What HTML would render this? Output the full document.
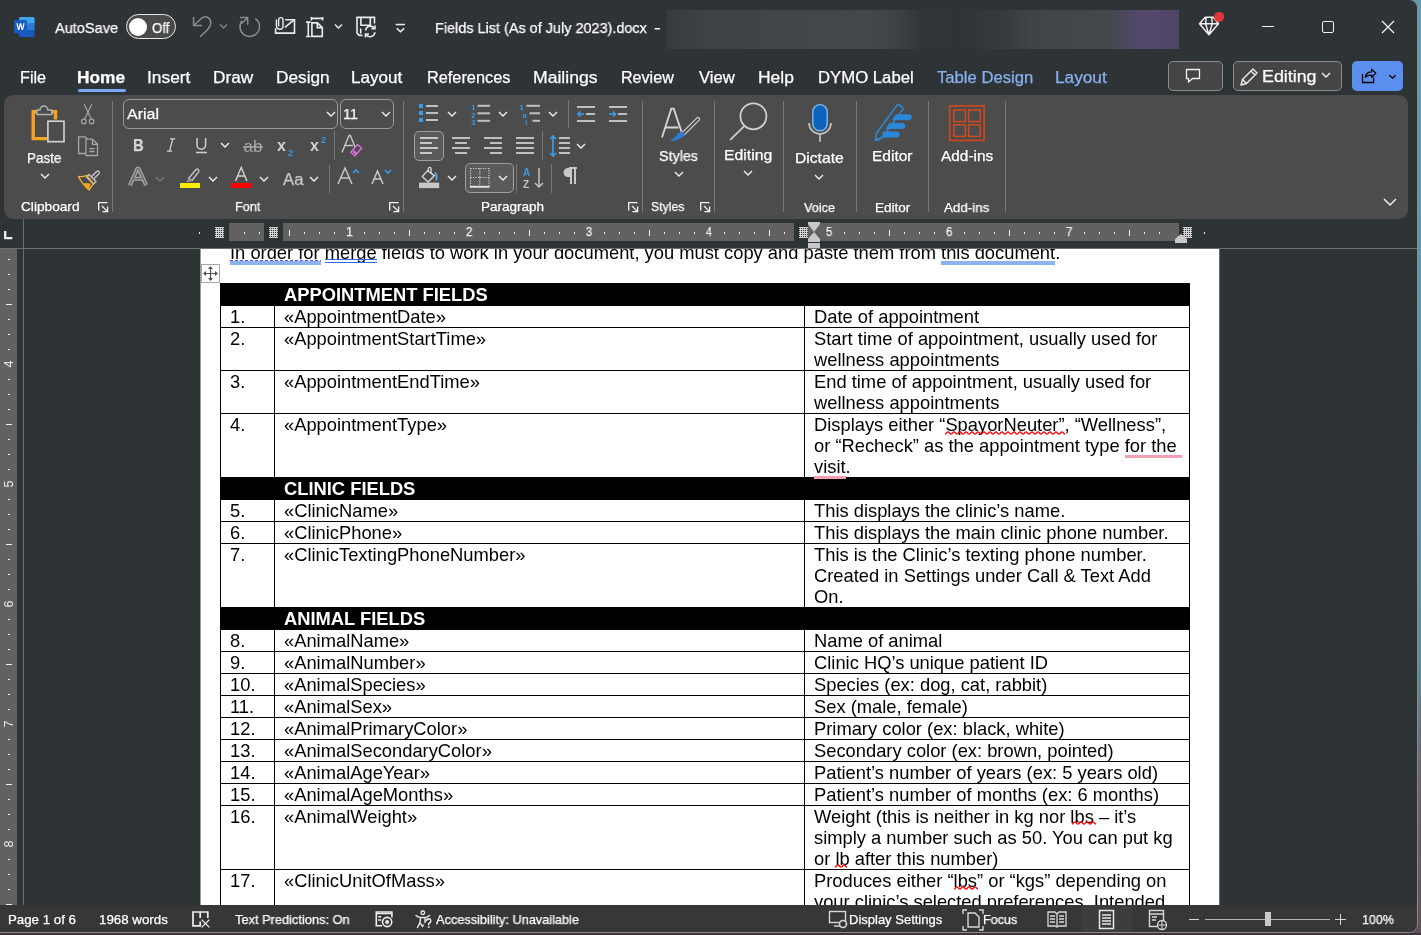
<!DOCTYPE html>
<html><head><meta charset="utf-8"><style>
html,body{margin:0;padding:0;width:1421px;height:935px;overflow:hidden;background:#3a3438;}
body{position:relative;font-family:"Liberation Sans",sans-serif;}
.t{position:absolute;white-space:pre;transform-origin:0 0;will-change:transform;}
.r{position:absolute;}
.s{position:absolute;overflow:visible;will-change:transform;}
</style></head><body>
<div class="r" style="left:0px;top:0px;width:1421px;height:935px;background:linear-gradient(180deg,#609db4 0%,#5a93a8 55%,#5d8a99 72%,#6e6670 82%,#5e5059 100%);"></div>
<div class="r" style="left:0px;top:933px;width:1421px;height:2px;background:#3e3439;"></div>
<div class="r" style="left:-10px;top:-1px;width:1428px;height:934px;background:#2e3336;border:1px solid #8a8a8a;border-radius:9px;box-sizing:border-box;"></div>
<svg class="s" style="left:13px;top:16px;" width="23" height="23" viewBox="0 0 23 23"><rect x="6" y="1" width="15.5" height="20" rx="1.6" fill="#185abd"/><rect x="6" y="1" width="15.5" height="7.5" rx="1.6" fill="#41a5ee"/><rect x="6" y="7" width="15.5" height="7" fill="#2b7cd3"/><rect x="1" y="4" width="13" height="13.5" rx="1.5" fill="#1a5bc0"/><path d="M3.3 7.3 5 14h1.3l1.2-4.6 1.2 4.6h1.3l1.7-6.7h-1.3l-1 4.7L8.2 7.3H6.8L5.6 12 4.6 7.3z" fill="#fff"/></svg>
<div class="t" style="left:55.00px;top:20.30px;font-size:15px;line-height:15px;color:#fff;-webkit-text-stroke:0.25px #fff;transform:scaleX(0.9701);">AutoSave</div>
<div class="r" style="left:126px;top:14px;width:50px;height:25px;background:#4a4a4a;border:1.5px solid #e8e8e8;border-radius:13px;box-sizing:border-box;"></div>
<div class="r" style="left:129px;top:18px;width:18px;height:18px;background:#fff;border-radius:50%;"></div>
<div class="t" style="left:152.10px;top:20.65px;font-size:14px;line-height:14px;color:#fff;-webkit-text-stroke:0.25px #fff;transform:scaleX(0.9468);">Off</div>
<svg class="s" style="left:186px;top:12px;" width="80" height="30" viewBox="0 0 80 30"><path d="M7.6 5v8.5H16" stroke="#8c8c8c" stroke-width="1.5" fill="none"/><path d="M8 13.2 15.5 6.3Q18.5 4 21.5 5.2Q25.5 7.5 24.5 12.5Q23.8 15.5 20.5 18.8L14 24.8" stroke="#8c8c8c" stroke-width="1.5" fill="none"/><path d="M34 12.5l3.5 3.5 3.5-3.5" stroke="#8c8c8c" stroke-width="1.2" fill="none"/><path d="M69.3 6.6A9.8 9.8 0 1 1 56 8.7" stroke="#8c8c8c" stroke-width="1.5" fill="none"/><path d="M54 5.5h7.7v7.2M61.5 5.7 55.5 11.5" stroke="#8c8c8c" stroke-width="1.5" fill="none"/></svg>
<svg class="s" style="left:270px;top:10px;" width="80" height="32" viewBox="0 0 80 32"><path d="M15.2 9.7H24.5V23.1H5.6V18.2" stroke="#ececec" stroke-width="1.6" fill="none"/><path d="M14.9 17.4 24 9.9" stroke="#ececec" stroke-width="1.6"/><path d="M8.6 16.5V9.8a2.2 2.2 0 0 1 4.4 0v6.2a3.3 3.3 0 0 1-6.6 0V9.5" stroke="#ececec" stroke-width="1.4" fill="none"/><path d="M38.3 12.1V26.5M36 12.1h4.6M36 26.5h4.6" stroke="#ececec" stroke-width="1.6" fill="none"/><path d="M41.4 8.4h11.2M41.4 7v3.5M52.6 7v3.5" stroke="#ececec" stroke-width="1.6" fill="none"/><path d="M41.9 12.9H47.5L52.3 17.6V26.4H41.9z M47.3 12.9v4.7h5" stroke="#ececec" stroke-width="1.6" fill="none" stroke-linejoin="miter"/><path d="M65 14.6l3.5 3.5 3.5-3.5" stroke="#ececec" stroke-width="1.4" fill="none"/></svg>
<svg class="s" style="left:350px;top:10px;" width="70" height="32" viewBox="0 0 70 32"><path d="M12.5 25.4H9.3L7 23.1V7.4H24.5V13.5" stroke="#ececec" stroke-width="1.6" fill="none"/><path d="M10.7 18.5V23.5M10.9 8v7.2h9.4V8" stroke="#ececec" stroke-width="1.6" fill="none"/><path d="M15.6 20.5a4.8 4.8 0 0 1 8.8-2.2M24.9 22.3a4.8 4.8 0 0 1-8.8 2.2" stroke="#ececec" stroke-width="1.6" fill="none"/><path d="M25 15.2v3.6h-3.6M15.4 27.5v-3.6H19" stroke="#ececec" stroke-width="1.5" fill="none"/><path d="M45.8 14.5h9.1M46.8 18.4l3.7 3.4 3.7-3.4" stroke="#ececec" stroke-width="1.5" fill="none"/></svg>
<div class="t" style="left:435.04px;top:19.70px;font-size:15px;line-height:15px;color:#fff;-webkit-text-stroke:0.25px #fff;transform:scaleX(0.9626);">Fields List (As of July 2023).docx</div>
<div class="t" style="left:654.20px;top:20.30px;font-size:15px;line-height:15px;color:#fff;-webkit-text-stroke:0.25px #fff;transform:scaleX(1.3333);">-</div>
<div class="r" style="left:667px;top:10px;width:512px;height:39px;background:linear-gradient(90deg,#363b3e 0%,#3e4346 8%,#43484b 40%,#3c4144 45%,#313538 50%,#2f3336 57%,#363b3e 66%,#3f4447 71%,#43484b 86%,#55496e 93%,#4e4567 100%);"></div>
<svg class="s" style="left:1190px;top:8px;" width="36" height="32" viewBox="0 0 36 32"><path d="M9.5 15.8 15.3 9.3H23.3L28.5 15.8 18.9 26.7Z M9.5 15.8H28.5 M16.2 9.5 15.6 15.8 18.9 26.7 M21.8 9.5 22.2 15.8 18.9 26.7" stroke="#f4f4f4" stroke-width="1.4" fill="none" stroke-linejoin="round"/><circle cx="29.1" cy="8.9" r="5" fill="#e2353b"/></svg>
<div class="r" style="left:1262px;top:26px;width:12px;height:1px;background:#f0f0f0;"></div>
<div class="r" style="left:1322px;top:21px;width:12px;height:12px;background:transparent;border:1.3px solid #f0f0f0;border-radius:2px;box-sizing:border-box;"></div>
<svg class="s" style="left:1381px;top:20px;" width="14" height="14" viewBox="0 0 14 14"><path d="M1 1l12 12M13 1L1 13" stroke="#f0f0f0" stroke-width="1.3"/></svg>
<div class="t" style="left:20.11px;top:70.06px;font-size:16px;line-height:16px;color:#ffffff;-webkit-text-stroke:0.25px #ffffff;transform:scaleX(1.0109);">File</div>
<div class="t" style="left:77.27px;top:70.06px;font-size:16px;line-height:16px;color:#ffffff;-webkit-text-stroke:0.25px #ffffff;font-weight:bold;transform:scaleX(1.0821);">Home</div>
<div class="t" style="left:146.64px;top:70.06px;font-size:16px;line-height:16px;color:#ffffff;-webkit-text-stroke:0.25px #ffffff;transform:scaleX(1.0840);">Insert</div>
<div class="t" style="left:212.62px;top:70.06px;font-size:16px;line-height:16px;color:#ffffff;-webkit-text-stroke:0.25px #ffffff;transform:scaleX(1.0754);">Draw</div>
<div class="t" style="left:276.02px;top:70.06px;font-size:16px;line-height:16px;color:#ffffff;-webkit-text-stroke:0.25px #ffffff;transform:scaleX(1.0774);">Design</div>
<div class="t" style="left:350.84px;top:70.06px;font-size:16px;line-height:16px;color:#ffffff;-webkit-text-stroke:0.25px #ffffff;transform:scaleX(1.0659);">Layout</div>
<div class="t" style="left:426.90px;top:70.06px;font-size:16px;line-height:16px;color:#ffffff;-webkit-text-stroke:0.25px #ffffff;transform:scaleX(1.0188);">References</div>
<div class="t" style="left:533.19px;top:70.06px;font-size:16px;line-height:16px;color:#ffffff;-webkit-text-stroke:0.25px #ffffff;transform:scaleX(1.1006);">Mailings</div>
<div class="t" style="left:621.21px;top:70.06px;font-size:16px;line-height:16px;color:#ffffff;-webkit-text-stroke:0.25px #ffffff;transform:scaleX(1.0059);">Review</div>
<div class="t" style="left:699.00px;top:70.06px;font-size:16px;line-height:16px;color:#ffffff;-webkit-text-stroke:0.25px #ffffff;transform:scaleX(1.0407);">View</div>
<div class="t" style="left:757.80px;top:70.06px;font-size:16px;line-height:16px;color:#ffffff;-webkit-text-stroke:0.25px #ffffff;transform:scaleX(1.0917);">Help</div>
<div class="t" style="left:817.96px;top:70.06px;font-size:16px;line-height:16px;color:#ffffff;-webkit-text-stroke:0.25px #ffffff;transform:scaleX(1.0452);">DYMO Label</div>
<div class="t" style="left:936.77px;top:70.06px;font-size:16px;line-height:16px;color:#88b1f0;-webkit-text-stroke:0.25px #88b1f0;transform:scaleX(1.0406);">Table Design</div>
<div class="t" style="left:1054.82px;top:70.06px;font-size:16px;line-height:16px;color:#88b1f0;-webkit-text-stroke:0.25px #88b1f0;transform:scaleX(1.0766);">Layout</div>
<div class="r" style="left:78px;top:89px;width:48px;height:3px;background:#7ba7f7;border-radius:2px;"></div>
<div class="r" style="left:1168px;top:61px;width:55px;height:30px;background:#454545;border:1px solid #8c8c8c;border-radius:5px;box-sizing:border-box;"></div>
<svg class="s" style="left:1184px;top:66px;" width="18" height="18" viewBox="0 0 18 18"><path d="M2.5 3.5h13v9h-7l-4 3.5v-3.5h-2z" stroke="#f0f0f0" stroke-width="1.3" fill="none" stroke-linejoin="round"/></svg>
<div class="r" style="left:1233px;top:61px;width:109px;height:30px;background:#454545;border:1px solid #8c8c8c;border-radius:5px;box-sizing:border-box;"></div>
<svg class="s" style="left:1237px;top:65px;" width="24" height="24" viewBox="0 0 24 24"><path d="M4 20l1.5-5.5L16 4l4 4L9.5 18.5z M14 6l4 4 M5.5 14.5l4 4" stroke="#f0f0f0" stroke-width="1.4" fill="none" stroke-linejoin="round"/></svg>
<div class="t" style="left:1261.77px;top:67.63px;font-size:16.5px;line-height:16.5px;color:#fff;-webkit-text-stroke:0.25px #fff;transform:scaleX(1.0811);">Editing</div>
<svg class="s" style="left:1320px;top:70px;" width="12" height="10" viewBox="0 0 12 10"><path d="M2 3l4 4 4-4" stroke="#f0f0f0" stroke-width="1.4" fill="none"/></svg>
<div class="r" style="left:1352px;top:61px;width:51px;height:30px;background:#5b8fef;border-radius:5px;"></div>
<svg class="s" style="left:1350px;top:58px;" width="56" height="36" viewBox="0 0 56 36"><path d="M12.5 16V24.5H23.6V19.4" stroke="#000" stroke-width="1.3" fill="none"/><path d="M15.2 19.3Q16.3 13.8 21.6 13.8V11.2L25.8 15.3 21.6 19.3V17.2Q17.5 17 15.2 19.3Z" stroke="#000" stroke-width="1.2" fill="none" stroke-linejoin="round"/><path d="M39.4 17.2l3.1 3 3.1-3" stroke="#000" stroke-width="1.3" fill="none"/></svg>
<div class="r" style="left:4px;top:95px;width:1404px;height:124px;background:#4c4c4c;border-radius:9px;"></div>
<div class="r" style="left:112px;top:101px;width:1px;height:111px;background:#777777;"></div>
<div class="r" style="left:403px;top:101px;width:1px;height:111px;background:#777777;"></div>
<div class="r" style="left:642px;top:101px;width:1px;height:111px;background:#777777;"></div>
<div class="r" style="left:714px;top:101px;width:1px;height:111px;background:#777777;"></div>
<div class="r" style="left:783px;top:101px;width:1px;height:111px;background:#777777;"></div>
<div class="r" style="left:856px;top:101px;width:1px;height:111px;background:#777777;"></div>
<div class="r" style="left:928px;top:101px;width:1px;height:111px;background:#777777;"></div>
<div class="r" style="left:1005px;top:101px;width:1px;height:111px;background:#777777;"></div>
<svg class="s" style="left:25px;top:100px;" width="45" height="46" viewBox="0 0 45 46"><path d="M22 38.6H8.2V11.7H12M27 11.7h3.5v7.8" stroke="#f5a21e" stroke-width="3.4" fill="none"/><path d="M11.8 14.6V10H15A3.9 3.9 0 0 1 22.8 10H26.8V14.6Z" stroke="#b4b4b4" stroke-width="1.5" fill="#4c4c4c" stroke-linejoin="round"/><rect x="22.9" y="21.2" width="16.1" height="20.5" stroke="#d4d4d4" stroke-width="1.6" fill="#4c4c4c"/></svg>
<div class="t" style="left:27.43px;top:150.53px;font-size:14.5px;line-height:14.5px;color:#fff;-webkit-text-stroke:0.25px #fff;transform:scaleX(0.9261);">Paste</div>
<svg class="s" style="left:39px;top:172px;" width="12" height="8" viewBox="0 0 12 8"><path d="M2 2l4 4 4-4" stroke="#f0f0f0" stroke-width="1.4" fill="none"/></svg>
<svg class="s" style="left:74px;top:100px;" width="30" height="90" viewBox="0 0 30 90"><path d="M10.2 4.3 17.2 19M17.8 4.3 10.6 19" stroke="#a6a6a6" stroke-width="1.2" fill="none"/><circle cx="9.8" cy="21.4" r="2.3" stroke="#a6a6a6" stroke-width="1.2" fill="#4c4c4c"/><circle cx="17.6" cy="21.4" r="2.3" stroke="#a6a6a6" stroke-width="1.2" fill="#4c4c4c"/></svg>
<svg class="s" style="left:74px;top:130px;" width="30" height="30" viewBox="0 0 30 30"><path d="M11.3 23.5H4.6V6.8H11L13.5 9.3" stroke="#a6a6a6" stroke-width="1.3" fill="none"/><path d="M11.9 9.2H18.4L23.5 14.3V25.5H11.9z M18.4 9.2V14.3H23.5 M15.3 18.6h5.3 M15.3 21.5h5.3" stroke="#a6a6a6" stroke-width="1.3" fill="none" stroke-linejoin="round"/></svg>
<svg class="s" style="left:74px;top:160px;" width="30" height="30" viewBox="0 0 30 30"><path d="M17.6 16.5 22.6 11.5a1.6 1.6 0 0 1 2.3 2.3L19.9 18.8" stroke="#c8c8c8" stroke-width="1.3" fill="none"/><path d="M15 14.5 22 21.5 19.5 24 12.5 17z" stroke="#c8c8c8" stroke-width="1.3" fill="none" stroke-linejoin="round"/><path d="M4.5 16.5Q9 17 12.8 15.3L19.3 23.6Q16.8 27.5 15 30Q8 24 4.5 16.5z" stroke="#f5b43a" stroke-width="1.3" fill="none" stroke-linejoin="round"/><path d="M9 23.5Q12.5 22.5 16.5 23.8Q16 27 15 29Q11.5 26.5 9 23.5z" fill="#f5a21e"/></svg>
<div class="t" style="left:20.92px;top:200.27px;font-size:13.5px;line-height:13.5px;color:#fff;-webkit-text-stroke:0.25px #fff;transform:scaleX(1.0125);">Clipboard</div>
<svg class="s" style="left:98px;top:202px;" width="12" height="12" viewBox="0 0 12 12"><path d="M0.7 8.6V0.7H9.5M4 4l5.6 5.6M9.6 4.4V9.6H4.4" stroke="#f4f4f4" stroke-width="1.3" fill="none"/></svg>
<div class="r" style="left:123px;top:99px;width:215px;height:30px;background:transparent;border:1px solid #9a9a9a;border-radius:6px;box-sizing:border-box;"></div>
<div class="r" style="left:340px;top:99px;width:54px;height:30px;background:transparent;border:1px solid #9a9a9a;border-radius:6px;box-sizing:border-box;"></div>
<div class="t" style="left:126.50px;top:106.28px;font-size:15.5px;line-height:15.5px;color:#fff;-webkit-text-stroke:0.25px #fff;transform:scaleX(1.0309);">Arial</div>
<div class="t" style="left:342.83px;top:106.28px;font-size:15.5px;line-height:15.5px;color:#fff;-webkit-text-stroke:0.25px #fff;transform:scaleX(0.9237);">11</div>
<svg class="s" style="left:324.6px;top:109.5px;" width="12" height="8" viewBox="0 0 12 8"><path d="M2 2l4 4 4-4" stroke="#f0f0f0" stroke-width="1.4" fill="none"/></svg>
<svg class="s" style="left:380px;top:109.5px;" width="12" height="8" viewBox="0 0 12 8"><path d="M2 2l4 4 4-4" stroke="#f0f0f0" stroke-width="1.4" fill="none"/></svg>
<div class="t" style="left:133.05px;top:136.83px;font-size:16.5px;line-height:16.5px;color:#d8d8d8;-webkit-text-stroke:0.25px #d8d8d8;font-weight:bold;transform:scaleX(0.8869);">B</div>
<svg class="s" style="left:162px;top:136px;" width="16" height="17" viewBox="0 0 16 17"><path d="M8 2.8h5.2M5 15.2h5.2M10.8 2.8 7.5 15.2" stroke="#d0d0d0" stroke-width="1.3" fill="none"/></svg>
<svg class="s" style="left:192px;top:134px;" width="18" height="22" viewBox="0 0 18 22"><path d="M5 4v7a4.3 4.3 0 0 0 8.6 0V4" stroke="#d0d0d0" stroke-width="1.5" fill="none"/><path d="M4 18.5h11" stroke="#d0d0d0" stroke-width="1.6"/></svg>
<svg class="s" style="left:219px;top:141px;" width="12" height="8" viewBox="0 0 12 8"><path d="M2 2l4 4 4-4" stroke="#f0f0f0" stroke-width="1.4" fill="none"/></svg>
<svg class="s" style="left:241px;top:137px;" width="24" height="20" viewBox="0 0 24 20"><text x="12" y="15" font-family="Liberation Sans" font-size="17" fill="#a8a8a8" text-anchor="middle">ab</text><path d="M2 10h20" stroke="#a8a8a8" stroke-width="1.5"/></svg>
<svg class="s" style="left:276px;top:136px;" width="22" height="22" viewBox="0 0 22 22"><text x="1" y="15" font-family="Liberation Sans" font-weight="bold" font-size="16" fill="#d0d0d0">x</text><text x="12" y="20" font-family="Liberation Sans" font-weight="bold" font-size="9" fill="#3a9ae8">2</text></svg>
<svg class="s" style="left:309px;top:134px;" width="22" height="22" viewBox="0 0 22 22"><text x="1" y="17" font-family="Liberation Sans" font-weight="bold" font-size="16" fill="#d0d0d0">x</text><text x="12" y="9" font-family="Liberation Sans" font-weight="bold" font-size="9" fill="#3a9ae8">2</text></svg>
<div class="r" style="left:334px;top:131px;width:1px;height:29px;background:#777777;"></div>
<svg class="s" style="left:340px;top:134px;" width="26" height="24" viewBox="0 0 26 24"><path d="M2 18.5 9 1.5h1.3L15.5 14M5 11.5h8" stroke="#c8c8c8" stroke-width="1.4" fill="none"/><path d="M10.8 18.2 17.6 10.6 21.6 14.2 14.8 21.8z" stroke="#d86ce0" stroke-width="1.5" fill="#4c4c4c" stroke-linejoin="round"/><path d="M12.6 17.9 14.2 16.1 17.2 18.9 15.6 20.6z" fill="#d86ce0"/></svg>
<svg class="s" style="left:126px;top:165px;" width="24" height="24" viewBox="0 0 24 24"><path d="M3.8 20.3 11.3 3.8h1.4L20.2 20.3M7.5 13.8h9" stroke="#a4a4a4" stroke-width="4" fill="none" stroke-linejoin="round"/><path d="M3.8 20.3 11.3 3.8h1.4L20.2 20.3M7.5 13.8h9" stroke="#6e6e6e" stroke-width="1.5" fill="none" stroke-linejoin="round"/></svg>
<svg class="s" style="left:153.6px;top:175px;" width="12" height="8" viewBox="0 0 12 8"><path d="M2 2l4 4 4-4" stroke="#7a7a7a" stroke-width="1.4" fill="none"/></svg>
<svg class="s" style="left:179px;top:165px;" width="24" height="24" viewBox="0 0 24 24"><path d="M9.5 13.5 17 4.5a1.8 1.8 0 0 1 2.7 2.3L13 15.5z" stroke="#c8c8c8" stroke-width="1.3" fill="none" stroke-linejoin="round"/><path d="M9.5 13.5 7 17h5l1-1.5z" fill="#8e8e8e"/><rect x="1" y="18" width="20" height="5" fill="#ffee00"/></svg>
<svg class="s" style="left:207.4px;top:175px;" width="12" height="8" viewBox="0 0 12 8"><path d="M2 2l4 4 4-4" stroke="#f0f0f0" stroke-width="1.4" fill="none"/></svg>
<svg class="s" style="left:231px;top:163px;" width="22" height="26" viewBox="0 0 22 26"><path d="M4.5 18 10.2 4.5 16 18M6.7 13h7" stroke="#d4d4d4" stroke-width="1.4" fill="none"/><rect x="0" y="20" width="20.5" height="5" fill="#f00"/></svg>
<svg class="s" style="left:258.1px;top:175px;" width="12" height="8" viewBox="0 0 12 8"><path d="M2 2l4 4 4-4" stroke="#f0f0f0" stroke-width="1.4" fill="none"/></svg>
<div class="t" style="left:282.50px;top:172.46px;font-size:16px;line-height:16px;color:#c8c8c8;-webkit-text-stroke:0.25px #c8c8c8;transform:scaleX(1.0459);">Aa</div>
<svg class="s" style="left:307.7px;top:175px;" width="12" height="8" viewBox="0 0 12 8"><path d="M2 2l4 4 4-4" stroke="#f0f0f0" stroke-width="1.4" fill="none"/></svg>
<div class="r" style="left:329px;top:165px;width:1px;height:28px;background:#777777;"></div>
<svg class="s" style="left:336px;top:166px;" width="24" height="20" viewBox="0 0 24 20"><path d="M2 18 9 2l7 16M5 12h8" stroke="#c8c8c8" stroke-width="1.5" fill="none"/><path d="M17 7l3-3 3 3" stroke="#3a9ae8" stroke-width="1.6" fill="none"/></svg>
<svg class="s" style="left:370px;top:166px;" width="22" height="20" viewBox="0 0 22 20"><path d="M2 18 7.5 5 13 18M4 13h7" stroke="#c8c8c8" stroke-width="1.5" fill="none"/><path d="M15 4l3 3 3-3" stroke="#3a9ae8" stroke-width="1.6" fill="none"/></svg>
<div class="t" style="left:234.59px;top:200.27px;font-size:13.5px;line-height:13.5px;color:#fff;-webkit-text-stroke:0.25px #fff;transform:scaleX(0.9375);">Font</div>
<svg class="s" style="left:389px;top:202px;" width="12" height="12" viewBox="0 0 12 12"><path d="M0.7 8.6V0.7H9.5M4 4l5.6 5.6M9.6 4.4V9.6H4.4" stroke="#f4f4f4" stroke-width="1.3" fill="none"/></svg>
<svg class="s" style="left:418px;top:103px;" width="24" height="20" viewBox="0 0 24 20"><rect x="1" y="1" width="4" height="4" fill="#3a9ae8"/><rect x="1" y="8" width="4" height="4" fill="#3a9ae8"/><rect x="1" y="15" width="4" height="4" fill="#3a9ae8"/><rect x="8" y="2" width="12" height="2" fill="#c0c0c0"/><rect x="8" y="9" width="12" height="2" fill="#c0c0c0"/><rect x="8" y="16" width="12" height="2" fill="#c0c0c0"/></svg>
<svg class="s" style="left:446px;top:110px;" width="12" height="8" viewBox="0 0 12 8"><path d="M2 2l4 4 4-4" stroke="#f0f0f0" stroke-width="1.4" fill="none"/></svg>
<svg class="s" style="left:469px;top:102px;" width="24" height="22" viewBox="0 0 24 22"><text x="2.3" y="8.2" font-size="7.5" font-weight="bold" fill="#3a9ae8" font-family="Liberation Sans">1</text><text x="2.3" y="15.7" font-size="7.5" font-weight="bold" fill="#3a9ae8" font-family="Liberation Sans">2</text><text x="2.3" y="23.2" font-size="7.5" font-weight="bold" fill="#3a9ae8" font-family="Liberation Sans">3</text><rect x="8.5" y="2.8" width="12.5" height="2" fill="#c0c0c0"/><rect x="8.5" y="10.3" width="12.5" height="2" fill="#c0c0c0"/><rect x="8.5" y="17.8" width="12.5" height="2" fill="#c0c0c0"/></svg>
<svg class="s" style="left:497px;top:110px;" width="12" height="8" viewBox="0 0 12 8"><path d="M2 2l4 4 4-4" stroke="#f0f0f0" stroke-width="1.4" fill="none"/></svg>
<svg class="s" style="left:519px;top:102px;" width="24" height="22" viewBox="0 0 24 22"><text x="0.5" y="8.2" font-size="7.5" font-weight="bold" fill="#3a9ae8" font-family="Liberation Sans">1</text><text x="3.5" y="15.7" font-size="7.5" font-weight="bold" fill="#3a9ae8" font-family="Liberation Sans">a</text><text x="6.3" y="23.2" font-size="7.5" font-weight="bold" fill="#3a9ae8" font-family="Liberation Sans">i</text><rect x="7.5" y="2.8" width="13.5" height="2" fill="#c0c0c0"/><rect x="10.5" y="10.3" width="10.5" height="2" fill="#c0c0c0"/><rect x="13.5" y="17.8" width="7.5" height="2" fill="#c0c0c0"/></svg>
<svg class="s" style="left:546.5px;top:110px;" width="12" height="8" viewBox="0 0 12 8"><path d="M2 2l4 4 4-4" stroke="#f0f0f0" stroke-width="1.4" fill="none"/></svg>
<svg class="s" style="left:576px;top:104px;" width="20" height="20" viewBox="0 0 20 20"><rect x="1" y="2" width="18" height="2" fill="#c0c0c0"/><rect x="10" y="9" width="9" height="2" fill="#c0c0c0"/><rect x="1" y="16" width="18" height="2" fill="#c0c0c0"/><path d="M8 10H2M4.5 7.5 2 10l2.5 2.5" stroke="#3a9ae8" stroke-width="1.6" fill="none"/></svg>
<svg class="s" style="left:608px;top:104px;" width="20" height="20" viewBox="0 0 20 20"><rect x="1" y="2" width="18" height="2" fill="#c0c0c0"/><rect x="10" y="9" width="9" height="2" fill="#c0c0c0"/><rect x="1" y="16" width="18" height="2" fill="#c0c0c0"/><path d="M1 10h6.5M5 7.5 7.5 10 5 12.5" stroke="#3a9ae8" stroke-width="1.6" fill="none"/></svg>
<div class="r" style="left:568px;top:100px;width:1px;height:28px;background:#777777;"></div>
<div class="r" style="left:414px;top:131px;width:30px;height:30px;background:#5a5a5a;border:1px solid #a0a0a0;border-radius:5px;box-sizing:border-box;"></div>
<svg class="s" style="left:419px;top:135px;" width="20" height="20" viewBox="0 0 20 20"><rect x="1" y="2" width="18" height="2" fill="#c8c8c8"/><rect x="1" y="7" width="12" height="2" fill="#c8c8c8"/><rect x="1" y="12" width="18" height="2" fill="#c8c8c8"/><rect x="1" y="17" width="12" height="2" fill="#c8c8c8"/></svg>
<svg class="s" style="left:451px;top:135px;" width="20" height="20" viewBox="0 0 20 20"><rect x="1" y="2" width="18" height="2" fill="#c0c0c0"/><rect x="4" y="7" width="12" height="2" fill="#c0c0c0"/><rect x="1" y="12" width="18" height="2" fill="#c0c0c0"/><rect x="4" y="17" width="12" height="2" fill="#c0c0c0"/></svg>
<svg class="s" style="left:483px;top:135px;" width="20" height="20" viewBox="0 0 20 20"><rect x="1" y="2" width="18" height="2" fill="#c0c0c0"/><rect x="7" y="7" width="12" height="2" fill="#c0c0c0"/><rect x="1" y="12" width="18" height="2" fill="#c0c0c0"/><rect x="7" y="17" width="12" height="2" fill="#c0c0c0"/></svg>
<svg class="s" style="left:515px;top:135px;" width="20" height="20" viewBox="0 0 20 20"><rect x="1" y="2" width="18" height="2" fill="#c0c0c0"/><rect x="1" y="7" width="18" height="2" fill="#c0c0c0"/><rect x="1" y="12" width="18" height="2" fill="#c0c0c0"/><rect x="1" y="17" width="18" height="2" fill="#c0c0c0"/></svg>
<div class="r" style="left:542px;top:131px;width:1px;height:29px;background:#777777;"></div>
<svg class="s" style="left:549px;top:134px;" width="24" height="24" viewBox="0 0 24 24"><path d="M4 2v20M1 5l3-3 3 3M1 19l3 3 3-3" stroke="#3a9ae8" stroke-width="1.7" fill="none"/><rect x="10" y="3" width="11" height="2" fill="#c0c0c0"/><rect x="10" y="8" width="11" height="2" fill="#c0c0c0"/><rect x="10" y="13" width="11" height="2" fill="#c0c0c0"/><rect x="10" y="18" width="11" height="2" fill="#c0c0c0"/></svg>
<svg class="s" style="left:575.3px;top:142px;" width="12" height="8" viewBox="0 0 12 8"><path d="M2 2l4 4 4-4" stroke="#f0f0f0" stroke-width="1.4" fill="none"/></svg>
<svg class="s" style="left:412px;top:160px;" width="30" height="30" viewBox="0 0 30 30"><path d="M10.2 16.6 15.6 10.6 22.4 15.6 16.2 22z" stroke="#d8d8d8" stroke-width="1.4" fill="none" stroke-linejoin="round"/><path d="M16.3 11.2V8.8a1.4 1.4 0 0 1 2.8 0V14" stroke="#d8d8d8" stroke-width="1.3" fill="none"/><path d="M23 12.5Q25.3 15 24.2 20.5" stroke="#5aaaf0" stroke-width="1.8" fill="none"/><rect x="7.3" y="23" width="19.6" height="4.8" fill="#c8c8c8" stroke="#dadada" stroke-width="0.6"/></svg>
<svg class="s" style="left:446px;top:174px;" width="12" height="8" viewBox="0 0 12 8"><path d="M2 2l4 4 4-4" stroke="#f0f0f0" stroke-width="1.4" fill="none"/></svg>
<div class="r" style="left:465px;top:163px;width:49px;height:30px;background:#5a5a5a;border:1px solid #a0a0a0;border-radius:5px;box-sizing:border-box;"></div>
<svg class="s" style="left:465px;top:163px;" width="30" height="30" viewBox="0 0 30 30"><rect x="5.5" y="5.5" width="18.5" height="18" stroke="#d4d4d4" stroke-width="1.1" stroke-dasharray="1.2 1.3" fill="none"/><path d="M14.8 5.5V23.5M5.5 14.5H24" stroke="#d4d4d4" stroke-width="1.1" stroke-dasharray="1.2 1.3"/><rect x="5" y="22.8" width="19.5" height="2" fill="#e0e0e0"/></svg>
<svg class="s" style="left:497px;top:174px;" width="12" height="8" viewBox="0 0 12 8"><path d="M2 2l4 4 4-4" stroke="#f0f0f0" stroke-width="1.4" fill="none"/></svg>
<div class="r" style="left:516px;top:164px;width:1px;height:29px;background:#777777;"></div>
<svg class="s" style="left:522px;top:165px;" width="24" height="26" viewBox="0 0 24 26"><text x="1" y="11" font-size="10" font-weight="bold" fill="#3a9ae8" font-family="Liberation Sans">A</text><text x="1" y="23" font-size="10" font-weight="bold" fill="#c0c0c0" font-family="Liberation Sans">Z</text><path d="M17 3v19M13 18l4 4 4-4" stroke="#c0c0c0" stroke-width="1.5" fill="none"/></svg>
<div class="r" style="left:551px;top:164px;width:1px;height:29px;background:#777777;"></div>
<svg class="s" style="left:560px;top:166px;" width="18" height="20" viewBox="0 0 18 20"><path d="M9 2h8M11 2v16M15 2v16" stroke="#c8c8c8" stroke-width="2" fill="none"/><path d="M11 2H8a4.5 4.5 0 0 0 0 9h3z" fill="#c8c8c8"/></svg>
<div class="t" style="left:481.13px;top:200.27px;font-size:13.5px;line-height:13.5px;color:#fff;-webkit-text-stroke:0.25px #fff;transform:scaleX(0.9942);">Paragraph</div>
<svg class="s" style="left:628px;top:202px;" width="12" height="12" viewBox="0 0 12 12"><path d="M0.7 8.6V0.7H9.5M4 4l5.6 5.6M9.6 4.4V9.6H4.4" stroke="#f4f4f4" stroke-width="1.3" fill="none"/></svg>
<svg class="s" style="left:658px;top:105px;" width="44" height="40" viewBox="0 0 44 40"><path d="M4 32.5 13.3 3.6h2.4L25 31M8 22.5h12.5" stroke="#d8d8d8" stroke-width="1.8" fill="none"/><path d="M25.5 28.5 40 14" stroke="#d0d0d0" stroke-width="4.2" stroke-linecap="round"/><path d="M25.5 28.5 40 14" stroke="#4c4c4c" stroke-width="1.8" stroke-linecap="round"/><path d="M11.5 35.5C16 36.5 23 35 27 29.5L23.8 26.5C19 27.5 18 33.5 11.5 35.5z" fill="#2a7fd4"/></svg>
<div class="t" style="left:659.36px;top:148.53px;font-size:14.5px;line-height:14.5px;color:#fff;-webkit-text-stroke:0.25px #fff;transform:scaleX(0.9830);">Styles</div>
<svg class="s" style="left:672.6px;top:170px;" width="12" height="8" viewBox="0 0 12 8"><path d="M2 2l4 4 4-4" stroke="#f0f0f0" stroke-width="1.4" fill="none"/></svg>
<div class="t" style="left:651.25px;top:200.27px;font-size:13.5px;line-height:13.5px;color:#fff;-webkit-text-stroke:0.25px #fff;transform:scaleX(0.9074);">Styles</div>
<svg class="s" style="left:700px;top:202px;" width="12" height="12" viewBox="0 0 12 12"><path d="M0.7 8.6V0.7H9.5M4 4l5.6 5.6M9.6 4.4V9.6H4.4" stroke="#f4f4f4" stroke-width="1.3" fill="none"/></svg>
<svg class="s" style="left:728px;top:102px;" width="42" height="42" viewBox="0 0 42 42"><circle cx="25.4" cy="14.3" r="13" stroke="#cfcfcf" stroke-width="1.8" fill="none"/><path d="M16 24.3 2.2 37.8" stroke="#cfcfcf" stroke-width="1.8"/></svg>
<div class="t" style="left:723.94px;top:147.53px;font-size:14.5px;line-height:14.5px;color:#fff;-webkit-text-stroke:0.25px #fff;transform:scaleX(1.0883);">Editing</div>
<svg class="s" style="left:742.4px;top:168.6px;" width="12" height="8" viewBox="0 0 12 8"><path d="M2 2l4 4 4-4" stroke="#f0f0f0" stroke-width="1.4" fill="none"/></svg>
<svg class="s" style="left:806px;top:103px;" width="28" height="42" viewBox="0 0 28 42"><rect x="6.8" y="1.6" width="14.4" height="26.2" rx="7.2" fill="#0e63ba" stroke="#7db7f2" stroke-width="1.4"/><path d="M3 20a11 11 0 0 0 22 0" stroke="#c8c8c8" stroke-width="1.6" fill="none"/><path d="M14 31v8" stroke="#c8c8c8" stroke-width="1.6"/></svg>
<div class="t" style="left:795.35px;top:151.03px;font-size:14.5px;line-height:14.5px;color:#fff;-webkit-text-stroke:0.25px #fff;transform:scaleX(1.0795);">Dictate</div>
<svg class="s" style="left:813.4px;top:172.9px;" width="12" height="8" viewBox="0 0 12 8"><path d="M2 2l4 4 4-4" stroke="#f0f0f0" stroke-width="1.4" fill="none"/></svg>
<div class="t" style="left:804.00px;top:201.07px;font-size:13.5px;line-height:13.5px;color:#fff;-webkit-text-stroke:0.25px #fff;transform:scaleX(0.9394);">Voice</div>
<svg class="s" style="left:860px;top:98px;" width="56" height="48" viewBox="0 0 56 48"><path d="M15.2 42.3 16.3 35.5 37 7.2a1.5 1.5 0 0 1 2.1-.4L42.5 9.3a1.5 1.5 0 0 1 .3 2.1L22 39.8z" stroke="#2b88d8" stroke-width="1.5" fill="none" stroke-linejoin="round"/><path d="M36 16.3H48.8a2.95 2.95 0 0 1 0 5.9H31.8zM29.6 25.1H42.3a2.95 2.95 0 0 1 0 5.9H25.3zM23.2 33.6H36.6a3 3 0 0 1 0 6H20.9z" fill="#2b88d8"/><path d="M15.2 42.3 20 41" stroke="#2b88d8" stroke-width="2"/></svg>
<div class="t" style="left:872.36px;top:149.03px;font-size:14.5px;line-height:14.5px;color:#fff;-webkit-text-stroke:0.25px #fff;transform:scaleX(1.0701);">Editor</div>
<div class="t" style="left:874.63px;top:201.07px;font-size:13.5px;line-height:13.5px;color:#fff;-webkit-text-stroke:0.25px #fff;transform:scaleX(0.9935);">Editor</div>
<svg class="s" style="left:860px;top:98px;" width="130" height="48" viewBox="0 0 130 48"><rect x="89.7" y="7.9" width="34.4" height="34.5" stroke="#d2491c" stroke-width="1.6" fill="none"/><rect x="93.8" y="12" width="11.6" height="11.6" stroke="#d2491c" stroke-width="1.5" fill="none"/><rect x="108.6" y="12" width="11.6" height="11.6" stroke="#d2491c" stroke-width="1.5" fill="none"/><rect x="93.8" y="26.8" width="11.6" height="11.6" stroke="#d2491c" stroke-width="1.5" fill="none"/><rect x="108.6" y="26.8" width="11.6" height="11.6" stroke="#d2491c" stroke-width="1.5" fill="none"/></svg>
<div class="t" style="left:941.20px;top:149.03px;font-size:14.5px;line-height:14.5px;color:#fff;-webkit-text-stroke:0.25px #fff;transform:scaleX(1.0627);">Add-ins</div>
<div class="t" style="left:943.90px;top:201.07px;font-size:13.5px;line-height:13.5px;color:#fff;-webkit-text-stroke:0.25px #fff;transform:scaleX(0.9891);">Add-ins</div>
<svg class="s" style="left:1382px;top:196px;" width="16" height="12" viewBox="0 0 16 12"><path d="M2 3l6 6 6-6" stroke="#f0f0f0" stroke-width="1.5" fill="none"/></svg>
<div class="r" style="left:0px;top:219px;width:1417px;height:686px;background:#2e3336;"></div>
<div class="r" style="left:0px;top:248px;width:1417px;height:1px;background:#6e6e6e;"></div>
<div class="r" style="left:23px;top:219px;width:1px;height:686px;background:#6e6e6e;"></div>
<svg class="s" style="left:0px;top:225px;" width="20" height="20" viewBox="0 0 20 20"><path d="M5.2 6V13.2H12.3" stroke="#f0f0f0" stroke-width="2.3" fill="none"/></svg>
<div class="r" style="left:229px;top:223px;width:35px;height:18px;background:#616161;"></div>
<div class="r" style="left:283px;top:223px;width:511px;height:18px;background:#616161;"></div>
<div class="r" style="left:808px;top:223px;width:371px;height:18px;background:#616161;"></div>
<svg class="s" style="left:215px;top:227px;" width="9" height="11" viewBox="0 0 9 11"><rect x="0" y="0" width="9" height="11" fill="#d2d2d2"/><rect x="2" y="1" width="1" height="1" fill="#3a3a3a"/><rect x="2" y="3" width="1" height="1" fill="#3a3a3a"/><rect x="2" y="5" width="1" height="1" fill="#3a3a3a"/><rect x="2" y="7" width="1" height="1" fill="#3a3a3a"/><rect x="2" y="9" width="1" height="1" fill="#3a3a3a"/><rect x="4" y="1" width="1" height="1" fill="#3a3a3a"/><rect x="4" y="3" width="1" height="1" fill="#3a3a3a"/><rect x="4" y="5" width="1" height="1" fill="#3a3a3a"/><rect x="4" y="7" width="1" height="1" fill="#3a3a3a"/><rect x="4" y="9" width="1" height="1" fill="#3a3a3a"/><rect x="6" y="1" width="1" height="1" fill="#3a3a3a"/><rect x="6" y="3" width="1" height="1" fill="#3a3a3a"/><rect x="6" y="5" width="1" height="1" fill="#3a3a3a"/><rect x="6" y="7" width="1" height="1" fill="#3a3a3a"/><rect x="6" y="9" width="1" height="1" fill="#3a3a3a"/><rect x="0" y="1" width="1" height="1" fill="#2e3336"/><rect x="8" y="1" width="1" height="1" fill="#2e3336"/><rect x="0" y="3" width="1" height="1" fill="#2e3336"/><rect x="8" y="3" width="1" height="1" fill="#2e3336"/><rect x="0" y="5" width="1" height="1" fill="#2e3336"/><rect x="8" y="5" width="1" height="1" fill="#2e3336"/><rect x="0" y="7" width="1" height="1" fill="#2e3336"/><rect x="8" y="7" width="1" height="1" fill="#2e3336"/><rect x="0" y="9" width="1" height="1" fill="#2e3336"/><rect x="8" y="9" width="1" height="1" fill="#2e3336"/></svg>
<svg class="s" style="left:269px;top:227px;" width="9" height="11" viewBox="0 0 9 11"><rect x="0" y="0" width="9" height="11" fill="#d2d2d2"/><rect x="2" y="1" width="1" height="1" fill="#3a3a3a"/><rect x="2" y="3" width="1" height="1" fill="#3a3a3a"/><rect x="2" y="5" width="1" height="1" fill="#3a3a3a"/><rect x="2" y="7" width="1" height="1" fill="#3a3a3a"/><rect x="2" y="9" width="1" height="1" fill="#3a3a3a"/><rect x="4" y="1" width="1" height="1" fill="#3a3a3a"/><rect x="4" y="3" width="1" height="1" fill="#3a3a3a"/><rect x="4" y="5" width="1" height="1" fill="#3a3a3a"/><rect x="4" y="7" width="1" height="1" fill="#3a3a3a"/><rect x="4" y="9" width="1" height="1" fill="#3a3a3a"/><rect x="6" y="1" width="1" height="1" fill="#3a3a3a"/><rect x="6" y="3" width="1" height="1" fill="#3a3a3a"/><rect x="6" y="5" width="1" height="1" fill="#3a3a3a"/><rect x="6" y="7" width="1" height="1" fill="#3a3a3a"/><rect x="6" y="9" width="1" height="1" fill="#3a3a3a"/><rect x="0" y="1" width="1" height="1" fill="#2e3336"/><rect x="8" y="1" width="1" height="1" fill="#2e3336"/><rect x="0" y="3" width="1" height="1" fill="#2e3336"/><rect x="8" y="3" width="1" height="1" fill="#2e3336"/><rect x="0" y="5" width="1" height="1" fill="#2e3336"/><rect x="8" y="5" width="1" height="1" fill="#2e3336"/><rect x="0" y="7" width="1" height="1" fill="#2e3336"/><rect x="8" y="7" width="1" height="1" fill="#2e3336"/><rect x="0" y="9" width="1" height="1" fill="#2e3336"/><rect x="8" y="9" width="1" height="1" fill="#2e3336"/></svg>
<svg class="s" style="left:799px;top:227px;" width="9" height="11" viewBox="0 0 9 11"><rect x="0" y="0" width="9" height="11" fill="#d2d2d2"/><rect x="2" y="1" width="1" height="1" fill="#3a3a3a"/><rect x="2" y="3" width="1" height="1" fill="#3a3a3a"/><rect x="2" y="5" width="1" height="1" fill="#3a3a3a"/><rect x="2" y="7" width="1" height="1" fill="#3a3a3a"/><rect x="2" y="9" width="1" height="1" fill="#3a3a3a"/><rect x="4" y="1" width="1" height="1" fill="#3a3a3a"/><rect x="4" y="3" width="1" height="1" fill="#3a3a3a"/><rect x="4" y="5" width="1" height="1" fill="#3a3a3a"/><rect x="4" y="7" width="1" height="1" fill="#3a3a3a"/><rect x="4" y="9" width="1" height="1" fill="#3a3a3a"/><rect x="6" y="1" width="1" height="1" fill="#3a3a3a"/><rect x="6" y="3" width="1" height="1" fill="#3a3a3a"/><rect x="6" y="5" width="1" height="1" fill="#3a3a3a"/><rect x="6" y="7" width="1" height="1" fill="#3a3a3a"/><rect x="6" y="9" width="1" height="1" fill="#3a3a3a"/><rect x="0" y="1" width="1" height="1" fill="#2e3336"/><rect x="8" y="1" width="1" height="1" fill="#2e3336"/><rect x="0" y="3" width="1" height="1" fill="#2e3336"/><rect x="8" y="3" width="1" height="1" fill="#2e3336"/><rect x="0" y="5" width="1" height="1" fill="#2e3336"/><rect x="8" y="5" width="1" height="1" fill="#2e3336"/><rect x="0" y="7" width="1" height="1" fill="#2e3336"/><rect x="8" y="7" width="1" height="1" fill="#2e3336"/><rect x="0" y="9" width="1" height="1" fill="#2e3336"/><rect x="8" y="9" width="1" height="1" fill="#2e3336"/></svg>
<svg class="s" style="left:1183px;top:227px;" width="9" height="11" viewBox="0 0 9 11"><rect x="0" y="0" width="9" height="11" fill="#d2d2d2"/><rect x="2" y="1" width="1" height="1" fill="#3a3a3a"/><rect x="2" y="3" width="1" height="1" fill="#3a3a3a"/><rect x="2" y="5" width="1" height="1" fill="#3a3a3a"/><rect x="2" y="7" width="1" height="1" fill="#3a3a3a"/><rect x="2" y="9" width="1" height="1" fill="#3a3a3a"/><rect x="4" y="1" width="1" height="1" fill="#3a3a3a"/><rect x="4" y="3" width="1" height="1" fill="#3a3a3a"/><rect x="4" y="5" width="1" height="1" fill="#3a3a3a"/><rect x="4" y="7" width="1" height="1" fill="#3a3a3a"/><rect x="4" y="9" width="1" height="1" fill="#3a3a3a"/><rect x="6" y="1" width="1" height="1" fill="#3a3a3a"/><rect x="6" y="3" width="1" height="1" fill="#3a3a3a"/><rect x="6" y="5" width="1" height="1" fill="#3a3a3a"/><rect x="6" y="7" width="1" height="1" fill="#3a3a3a"/><rect x="6" y="9" width="1" height="1" fill="#3a3a3a"/><rect x="0" y="1" width="1" height="1" fill="#2e3336"/><rect x="8" y="1" width="1" height="1" fill="#2e3336"/><rect x="0" y="3" width="1" height="1" fill="#2e3336"/><rect x="8" y="3" width="1" height="1" fill="#2e3336"/><rect x="0" y="5" width="1" height="1" fill="#2e3336"/><rect x="8" y="5" width="1" height="1" fill="#2e3336"/><rect x="0" y="7" width="1" height="1" fill="#2e3336"/><rect x="8" y="7" width="1" height="1" fill="#2e3336"/><rect x="0" y="9" width="1" height="1" fill="#2e3336"/><rect x="8" y="9" width="1" height="1" fill="#2e3336"/></svg>
<div class="r" style="left:199px;top:232px;width:1px;height:2px;background:#f0f0f0;"></div>
<div class="r" style="left:244px;top:232px;width:1px;height:2px;background:#f0f0f0;"></div>
<div class="r" style="left:259px;top:232px;width:1px;height:2px;background:#f0f0f0;"></div>
<div class="r" style="left:289px;top:230px;width:1px;height:6px;background:#f0f0f0;"></div>
<div class="r" style="left:304px;top:232px;width:1px;height:2px;background:#f0f0f0;"></div>
<div class="r" style="left:319px;top:232px;width:1px;height:2px;background:#f0f0f0;"></div>
<div class="r" style="left:334px;top:232px;width:1px;height:2px;background:#f0f0f0;"></div>
<div class="r" style="left:364px;top:232px;width:1px;height:2px;background:#f0f0f0;"></div>
<div class="r" style="left:379px;top:232px;width:1px;height:2px;background:#f0f0f0;"></div>
<div class="r" style="left:394px;top:232px;width:1px;height:2px;background:#f0f0f0;"></div>
<div class="r" style="left:409px;top:230px;width:1px;height:6px;background:#f0f0f0;"></div>
<div class="r" style="left:424px;top:232px;width:1px;height:2px;background:#f0f0f0;"></div>
<div class="r" style="left:439px;top:232px;width:1px;height:2px;background:#f0f0f0;"></div>
<div class="r" style="left:454px;top:232px;width:1px;height:2px;background:#f0f0f0;"></div>
<div class="r" style="left:484px;top:232px;width:1px;height:2px;background:#f0f0f0;"></div>
<div class="r" style="left:499px;top:232px;width:1px;height:2px;background:#f0f0f0;"></div>
<div class="r" style="left:514px;top:232px;width:1px;height:2px;background:#f0f0f0;"></div>
<div class="r" style="left:529px;top:230px;width:1px;height:6px;background:#f0f0f0;"></div>
<div class="r" style="left:544px;top:232px;width:1px;height:2px;background:#f0f0f0;"></div>
<div class="r" style="left:559px;top:232px;width:1px;height:2px;background:#f0f0f0;"></div>
<div class="r" style="left:574px;top:232px;width:1px;height:2px;background:#f0f0f0;"></div>
<div class="r" style="left:604px;top:232px;width:1px;height:2px;background:#f0f0f0;"></div>
<div class="r" style="left:619px;top:232px;width:1px;height:2px;background:#f0f0f0;"></div>
<div class="r" style="left:634px;top:232px;width:1px;height:2px;background:#f0f0f0;"></div>
<div class="r" style="left:649px;top:230px;width:1px;height:6px;background:#f0f0f0;"></div>
<div class="r" style="left:664px;top:232px;width:1px;height:2px;background:#f0f0f0;"></div>
<div class="r" style="left:679px;top:232px;width:1px;height:2px;background:#f0f0f0;"></div>
<div class="r" style="left:694px;top:232px;width:1px;height:2px;background:#f0f0f0;"></div>
<div class="r" style="left:724px;top:232px;width:1px;height:2px;background:#f0f0f0;"></div>
<div class="r" style="left:739px;top:232px;width:1px;height:2px;background:#f0f0f0;"></div>
<div class="r" style="left:754px;top:232px;width:1px;height:2px;background:#f0f0f0;"></div>
<div class="r" style="left:769px;top:230px;width:1px;height:6px;background:#f0f0f0;"></div>
<div class="r" style="left:784px;top:232px;width:1px;height:2px;background:#f0f0f0;"></div>
<div class="r" style="left:844px;top:232px;width:1px;height:2px;background:#f0f0f0;"></div>
<div class="r" style="left:859px;top:232px;width:1px;height:2px;background:#f0f0f0;"></div>
<div class="r" style="left:874px;top:232px;width:1px;height:2px;background:#f0f0f0;"></div>
<div class="r" style="left:889px;top:230px;width:1px;height:6px;background:#f0f0f0;"></div>
<div class="r" style="left:904px;top:232px;width:1px;height:2px;background:#f0f0f0;"></div>
<div class="r" style="left:919px;top:232px;width:1px;height:2px;background:#f0f0f0;"></div>
<div class="r" style="left:934px;top:232px;width:1px;height:2px;background:#f0f0f0;"></div>
<div class="r" style="left:964px;top:232px;width:1px;height:2px;background:#f0f0f0;"></div>
<div class="r" style="left:979px;top:232px;width:1px;height:2px;background:#f0f0f0;"></div>
<div class="r" style="left:994px;top:232px;width:1px;height:2px;background:#f0f0f0;"></div>
<div class="r" style="left:1009px;top:230px;width:1px;height:6px;background:#f0f0f0;"></div>
<div class="r" style="left:1024px;top:232px;width:1px;height:2px;background:#f0f0f0;"></div>
<div class="r" style="left:1039px;top:232px;width:1px;height:2px;background:#f0f0f0;"></div>
<div class="r" style="left:1054px;top:232px;width:1px;height:2px;background:#f0f0f0;"></div>
<div class="r" style="left:1084px;top:232px;width:1px;height:2px;background:#f0f0f0;"></div>
<div class="r" style="left:1099px;top:232px;width:1px;height:2px;background:#f0f0f0;"></div>
<div class="r" style="left:1114px;top:232px;width:1px;height:2px;background:#f0f0f0;"></div>
<div class="r" style="left:1129px;top:230px;width:1px;height:6px;background:#f0f0f0;"></div>
<div class="r" style="left:1144px;top:232px;width:1px;height:2px;background:#f0f0f0;"></div>
<div class="r" style="left:1159px;top:232px;width:1px;height:2px;background:#f0f0f0;"></div>
<div class="r" style="left:1204px;top:232px;width:1px;height:2px;background:#f0f0f0;"></div>
<div class="t" style="left:345.59px;top:226.42px;font-size:12.5px;line-height:12.5px;color:#f0f0f0;-webkit-text-stroke:0.25px #f0f0f0;transform:scaleX(0.9747);">1</div>
<div class="t" style="left:465.92px;top:226.42px;font-size:12.5px;line-height:12.5px;color:#f0f0f0;-webkit-text-stroke:0.25px #f0f0f0;transform:scaleX(0.9217);">2</div>
<div class="t" style="left:586.11px;top:226.42px;font-size:12.5px;line-height:12.5px;color:#f0f0f0;-webkit-text-stroke:0.25px #f0f0f0;transform:scaleX(0.8833);">3</div>
<div class="t" style="left:706.29px;top:226.42px;font-size:12.5px;line-height:12.5px;color:#f0f0f0;-webkit-text-stroke:0.25px #f0f0f0;transform:scaleX(0.8314);">4</div>
<div class="t" style="left:826.05px;top:226.42px;font-size:12.5px;line-height:12.5px;color:#f0f0f0;-webkit-text-stroke:0.25px #f0f0f0;transform:scaleX(0.8926);">5</div>
<div class="t" style="left:945.93px;top:226.42px;font-size:12.5px;line-height:12.5px;color:#f0f0f0;-webkit-text-stroke:0.25px #f0f0f0;transform:scaleX(0.9118);">6</div>
<div class="t" style="left:1065.92px;top:226.42px;font-size:12.5px;line-height:12.5px;color:#f0f0f0;-webkit-text-stroke:0.25px #f0f0f0;transform:scaleX(0.9217);">7</div>
<svg class="s" style="left:807px;top:221px;" width="14" height="27" viewBox="0 0 14 27"><path d="M1 1h12v2L7 11 1 3z" fill="#c8c8c8"/><path d="M7 11l6 7v3H1v-3z" fill="#c8c8c8"/><rect x="1" y="22" width="12" height="5" fill="#c8c8c8"/></svg>
<svg class="s" style="left:1174px;top:233px;" width="14" height="10" viewBox="0 0 14 10"><path d="M7 1 13 6v4H1V6z" fill="#c8c8c8"/></svg>
<div class="r" style="left:0px;top:249px;width:17px;height:656px;background:#616161;"></div>
<div class="r" style="left:8px;top:259px;width:2px;height:1px;background:#f0f0f0;"></div>
<div class="r" style="left:8px;top:274px;width:2px;height:1px;background:#f0f0f0;"></div>
<div class="r" style="left:8px;top:289px;width:2px;height:1px;background:#f0f0f0;"></div>
<div class="r" style="left:6px;top:304px;width:6px;height:1px;background:#f0f0f0;"></div>
<div class="r" style="left:8px;top:319px;width:2px;height:1px;background:#f0f0f0;"></div>
<div class="r" style="left:8px;top:334px;width:2px;height:1px;background:#f0f0f0;"></div>
<div class="r" style="left:8px;top:349px;width:2px;height:1px;background:#f0f0f0;"></div>
<div class="r" style="left:8px;top:379px;width:2px;height:1px;background:#f0f0f0;"></div>
<div class="r" style="left:8px;top:394px;width:2px;height:1px;background:#f0f0f0;"></div>
<div class="r" style="left:8px;top:409px;width:2px;height:1px;background:#f0f0f0;"></div>
<div class="r" style="left:6px;top:424px;width:6px;height:1px;background:#f0f0f0;"></div>
<div class="r" style="left:8px;top:439px;width:2px;height:1px;background:#f0f0f0;"></div>
<div class="r" style="left:8px;top:454px;width:2px;height:1px;background:#f0f0f0;"></div>
<div class="r" style="left:8px;top:469px;width:2px;height:1px;background:#f0f0f0;"></div>
<div class="r" style="left:8px;top:499px;width:2px;height:1px;background:#f0f0f0;"></div>
<div class="r" style="left:8px;top:514px;width:2px;height:1px;background:#f0f0f0;"></div>
<div class="r" style="left:8px;top:529px;width:2px;height:1px;background:#f0f0f0;"></div>
<div class="r" style="left:6px;top:544px;width:6px;height:1px;background:#f0f0f0;"></div>
<div class="r" style="left:8px;top:559px;width:2px;height:1px;background:#f0f0f0;"></div>
<div class="r" style="left:8px;top:574px;width:2px;height:1px;background:#f0f0f0;"></div>
<div class="r" style="left:8px;top:589px;width:2px;height:1px;background:#f0f0f0;"></div>
<div class="r" style="left:8px;top:619px;width:2px;height:1px;background:#f0f0f0;"></div>
<div class="r" style="left:8px;top:634px;width:2px;height:1px;background:#f0f0f0;"></div>
<div class="r" style="left:8px;top:649px;width:2px;height:1px;background:#f0f0f0;"></div>
<div class="r" style="left:6px;top:664px;width:6px;height:1px;background:#f0f0f0;"></div>
<div class="r" style="left:8px;top:679px;width:2px;height:1px;background:#f0f0f0;"></div>
<div class="r" style="left:8px;top:694px;width:2px;height:1px;background:#f0f0f0;"></div>
<div class="r" style="left:8px;top:709px;width:2px;height:1px;background:#f0f0f0;"></div>
<div class="r" style="left:8px;top:739px;width:2px;height:1px;background:#f0f0f0;"></div>
<div class="r" style="left:8px;top:754px;width:2px;height:1px;background:#f0f0f0;"></div>
<div class="r" style="left:8px;top:769px;width:2px;height:1px;background:#f0f0f0;"></div>
<div class="r" style="left:6px;top:784px;width:6px;height:1px;background:#f0f0f0;"></div>
<div class="r" style="left:8px;top:799px;width:2px;height:1px;background:#f0f0f0;"></div>
<div class="r" style="left:8px;top:814px;width:2px;height:1px;background:#f0f0f0;"></div>
<div class="r" style="left:8px;top:829px;width:2px;height:1px;background:#f0f0f0;"></div>
<div class="r" style="left:8px;top:859px;width:2px;height:1px;background:#f0f0f0;"></div>
<div class="r" style="left:8px;top:874px;width:2px;height:1px;background:#f0f0f0;"></div>
<div class="r" style="left:8px;top:889px;width:2px;height:1px;background:#f0f0f0;"></div>
<div class="r" style="left:6px;top:904px;width:6px;height:1px;background:#f0f0f0;"></div>
<div class="t" style="left:2px;top:358px;width:14px;height:12px;font-size:12.5px;line-height:12px;color:#e8e8e8;text-align:center;transform:rotate(-90deg);transform-origin:50% 50%;">4</div>
<div class="t" style="left:2px;top:478px;width:14px;height:12px;font-size:12.5px;line-height:12px;color:#e8e8e8;text-align:center;transform:rotate(-90deg);transform-origin:50% 50%;">5</div>
<div class="t" style="left:2px;top:598px;width:14px;height:12px;font-size:12.5px;line-height:12px;color:#e8e8e8;text-align:center;transform:rotate(-90deg);transform-origin:50% 50%;">6</div>
<div class="t" style="left:2px;top:718px;width:14px;height:12px;font-size:12.5px;line-height:12px;color:#e8e8e8;text-align:center;transform:rotate(-90deg);transform-origin:50% 50%;">7</div>
<div class="t" style="left:2px;top:838px;width:14px;height:12px;font-size:12.5px;line-height:12px;color:#e8e8e8;text-align:center;transform:rotate(-90deg);transform-origin:50% 50%;">8</div>
<div style="position:absolute;left:0;top:249px;width:1417px;height:656px;overflow:hidden"><div style="position:absolute;left:0;top:-249px;width:1417px;height:905px">
<div class="r" style="left:200px;top:249px;width:1px;height:656px;background:#9a9a9a;"></div>
<div class="r" style="left:201px;top:249px;width:1018px;height:656px;background:#ffffff;"></div>
<div class="r" style="left:1219px;top:249px;width:1px;height:656px;background:#6a6a6a;"></div>
<div class="r" style="left:201px;top:264px;width:19px;height:19px;background:#fff;border:1px solid #a8a8a8;box-sizing:border-box;"></div>
<svg class="s" style="left:202px;top:265px;" width="17" height="17" viewBox="0 0 17 17"><path d="M8.5 2v13M2 8.5h13" stroke="#505050" stroke-width="1.2"/><path d="M8.5 1 6 4h5zM8.5 16 6 13h5zM1 8.5 4 6v5zM16 8.5 13 6v5z" fill="#505050"/></svg>
<div class="t" style="left:230.4px;top:243.88px;font-size:18.33px;line-height:18.33px;color:#000;">In order for merge fields to work in your document, you must copy and paste them from this document.</div>
<div class="r" style="left:230px;top:260px;width:91px;height:1px;background:repeating-linear-gradient(90deg,#5a4ee8 0 3px,transparent 3px 5px);"></div>
<div class="r" style="left:230px;top:261px;width:91px;height:4px;background:#8cb2f0;"></div>
<div class="r" style="left:325px;top:259px;width:52px;height:1px;background:#2e6be0;"></div>
<div class="r" style="left:325px;top:262px;width:52px;height:1px;background:#2e6be0;"></div>
<div class="r" style="left:941px;top:261px;width:114px;height:4px;background:#8cb2f0;"></div>
<div class="r" style="left:220px;top:283px;width:970px;height:23px;background:#000;"></div>
<div class="t" style="left:284.4px;top:285.63px;font-size:18.33px;line-height:18.33px;color:#fff;font-weight:bold;">APPOINTMENT FIELDS</div>
<div class="r" style="left:220px;top:306px;width:1px;height:21px;background:#000;"></div>
<div class="r" style="left:274px;top:306px;width:1px;height:21px;background:#000;"></div>
<div class="r" style="left:804px;top:306px;width:1px;height:21px;background:#000;"></div>
<div class="r" style="left:1189px;top:306px;width:1px;height:21px;background:#000;"></div>
<div class="r" style="left:220px;top:327px;width:970px;height:1px;background:#000;"></div>
<div class="t" style="left:230.2px;top:307.63px;font-size:18.33px;line-height:18.33px;color:#000;">1.</div>
<div class="t" style="left:284.4px;top:307.63px;font-size:18.33px;line-height:18.33px;color:#000;">«AppointmentDate»</div>
<div class="t" style="left:814.4px;top:307.63px;font-size:18.33px;line-height:18.33px;color:#000;">Date of appointment</div>
<div class="r" style="left:220px;top:328px;width:1px;height:42px;background:#000;"></div>
<div class="r" style="left:274px;top:328px;width:1px;height:42px;background:#000;"></div>
<div class="r" style="left:804px;top:328px;width:1px;height:42px;background:#000;"></div>
<div class="r" style="left:1189px;top:328px;width:1px;height:42px;background:#000;"></div>
<div class="r" style="left:220px;top:370px;width:970px;height:1px;background:#000;"></div>
<div class="t" style="left:230.2px;top:329.63px;font-size:18.33px;line-height:18.33px;color:#000;">2.</div>
<div class="t" style="left:284.4px;top:329.63px;font-size:18.33px;line-height:18.33px;color:#000;">«AppointmentStartTime»</div>
<div class="t" style="left:814.4px;top:329.63px;font-size:18.33px;line-height:18.33px;color:#000;">Start time of appointment, usually used for</div>
<div class="t" style="left:814.4px;top:350.63px;font-size:18.33px;line-height:18.33px;color:#000;">wellness appointments</div>
<div class="r" style="left:220px;top:371px;width:1px;height:42px;background:#000;"></div>
<div class="r" style="left:274px;top:371px;width:1px;height:42px;background:#000;"></div>
<div class="r" style="left:804px;top:371px;width:1px;height:42px;background:#000;"></div>
<div class="r" style="left:1189px;top:371px;width:1px;height:42px;background:#000;"></div>
<div class="r" style="left:220px;top:413px;width:970px;height:1px;background:#000;"></div>
<div class="t" style="left:230.2px;top:372.63px;font-size:18.33px;line-height:18.33px;color:#000;">3.</div>
<div class="t" style="left:284.4px;top:372.63px;font-size:18.33px;line-height:18.33px;color:#000;">«AppointmentEndTime»</div>
<div class="t" style="left:814.4px;top:372.63px;font-size:18.33px;line-height:18.33px;color:#000;">End time of appointment, usually used for</div>
<div class="t" style="left:814.4px;top:393.63px;font-size:18.33px;line-height:18.33px;color:#000;">wellness appointments</div>
<div class="r" style="left:220px;top:414px;width:1px;height:63px;background:#000;"></div>
<div class="r" style="left:274px;top:414px;width:1px;height:63px;background:#000;"></div>
<div class="r" style="left:804px;top:414px;width:1px;height:63px;background:#000;"></div>
<div class="r" style="left:1189px;top:414px;width:1px;height:63px;background:#000;"></div>
<div class="r" style="left:220px;top:477px;width:970px;height:1px;background:#000;"></div>
<div class="t" style="left:230.2px;top:415.63px;font-size:18.33px;line-height:18.33px;color:#000;">4.</div>
<div class="t" style="left:284.4px;top:415.63px;font-size:18.33px;line-height:18.33px;color:#000;">«AppointmentType»</div>
<div class="t" style="left:814.4px;top:415.63px;font-size:18.33px;line-height:18.33px;color:#000;">Displays either “SpayorNeuter”, “Wellness”,</div>
<div class="t" style="left:814.4px;top:436.63px;font-size:18.33px;line-height:18.33px;color:#000;">or “Recheck” as the appointment type for the</div>
<div class="t" style="left:814.4px;top:457.63px;font-size:18.33px;line-height:18.33px;color:#000;">visit.</div>
<div class="r" style="left:220px;top:477px;width:970px;height:23px;background:#000;"></div>
<div class="t" style="left:284.4px;top:479.63px;font-size:18.33px;line-height:18.33px;color:#fff;font-weight:bold;">CLINIC FIELDS</div>
<div class="r" style="left:220px;top:500px;width:1px;height:21px;background:#000;"></div>
<div class="r" style="left:274px;top:500px;width:1px;height:21px;background:#000;"></div>
<div class="r" style="left:804px;top:500px;width:1px;height:21px;background:#000;"></div>
<div class="r" style="left:1189px;top:500px;width:1px;height:21px;background:#000;"></div>
<div class="r" style="left:220px;top:521px;width:970px;height:1px;background:#000;"></div>
<div class="t" style="left:230.2px;top:501.63px;font-size:18.33px;line-height:18.33px;color:#000;">5.</div>
<div class="t" style="left:284.4px;top:501.63px;font-size:18.33px;line-height:18.33px;color:#000;">«ClinicName»</div>
<div class="t" style="left:814.4px;top:501.63px;font-size:18.33px;line-height:18.33px;color:#000;">This displays the clinic’s name.</div>
<div class="r" style="left:220px;top:522px;width:1px;height:21px;background:#000;"></div>
<div class="r" style="left:274px;top:522px;width:1px;height:21px;background:#000;"></div>
<div class="r" style="left:804px;top:522px;width:1px;height:21px;background:#000;"></div>
<div class="r" style="left:1189px;top:522px;width:1px;height:21px;background:#000;"></div>
<div class="r" style="left:220px;top:543px;width:970px;height:1px;background:#000;"></div>
<div class="t" style="left:230.2px;top:523.63px;font-size:18.33px;line-height:18.33px;color:#000;">6.</div>
<div class="t" style="left:284.4px;top:523.63px;font-size:18.33px;line-height:18.33px;color:#000;">«ClinicPhone»</div>
<div class="t" style="left:814.4px;top:523.63px;font-size:18.33px;line-height:18.33px;color:#000;">This displays the main clinic phone number.</div>
<div class="r" style="left:220px;top:544px;width:1px;height:63px;background:#000;"></div>
<div class="r" style="left:274px;top:544px;width:1px;height:63px;background:#000;"></div>
<div class="r" style="left:804px;top:544px;width:1px;height:63px;background:#000;"></div>
<div class="r" style="left:1189px;top:544px;width:1px;height:63px;background:#000;"></div>
<div class="r" style="left:220px;top:607px;width:970px;height:1px;background:#000;"></div>
<div class="t" style="left:230.2px;top:545.63px;font-size:18.33px;line-height:18.33px;color:#000;">7.</div>
<div class="t" style="left:284.4px;top:545.63px;font-size:18.33px;line-height:18.33px;color:#000;">«ClinicTextingPhoneNumber»</div>
<div class="t" style="left:814.4px;top:545.63px;font-size:18.33px;line-height:18.33px;color:#000;">This is the Clinic’s texting phone number.</div>
<div class="t" style="left:814.4px;top:566.63px;font-size:18.33px;line-height:18.33px;color:#000;">Created in Settings under Call &amp; Text Add</div>
<div class="t" style="left:814.4px;top:587.63px;font-size:18.33px;line-height:18.33px;color:#000;">On.</div>
<div class="r" style="left:220px;top:607px;width:970px;height:23px;background:#000;"></div>
<div class="t" style="left:284.4px;top:609.63px;font-size:18.33px;line-height:18.33px;color:#fff;font-weight:bold;">ANIMAL FIELDS</div>
<div class="r" style="left:220px;top:630px;width:1px;height:21px;background:#000;"></div>
<div class="r" style="left:274px;top:630px;width:1px;height:21px;background:#000;"></div>
<div class="r" style="left:804px;top:630px;width:1px;height:21px;background:#000;"></div>
<div class="r" style="left:1189px;top:630px;width:1px;height:21px;background:#000;"></div>
<div class="r" style="left:220px;top:651px;width:970px;height:1px;background:#000;"></div>
<div class="t" style="left:230.2px;top:631.63px;font-size:18.33px;line-height:18.33px;color:#000;">8.</div>
<div class="t" style="left:284.4px;top:631.63px;font-size:18.33px;line-height:18.33px;color:#000;">«AnimalName»</div>
<div class="t" style="left:814.4px;top:631.63px;font-size:18.33px;line-height:18.33px;color:#000;">Name of animal</div>
<div class="r" style="left:220px;top:652px;width:1px;height:21px;background:#000;"></div>
<div class="r" style="left:274px;top:652px;width:1px;height:21px;background:#000;"></div>
<div class="r" style="left:804px;top:652px;width:1px;height:21px;background:#000;"></div>
<div class="r" style="left:1189px;top:652px;width:1px;height:21px;background:#000;"></div>
<div class="r" style="left:220px;top:673px;width:970px;height:1px;background:#000;"></div>
<div class="t" style="left:230.2px;top:653.63px;font-size:18.33px;line-height:18.33px;color:#000;">9.</div>
<div class="t" style="left:284.4px;top:653.63px;font-size:18.33px;line-height:18.33px;color:#000;">«AnimalNumber»</div>
<div class="t" style="left:814.4px;top:653.63px;font-size:18.33px;line-height:18.33px;color:#000;">Clinic HQ’s unique patient ID</div>
<div class="r" style="left:220px;top:674px;width:1px;height:21px;background:#000;"></div>
<div class="r" style="left:274px;top:674px;width:1px;height:21px;background:#000;"></div>
<div class="r" style="left:804px;top:674px;width:1px;height:21px;background:#000;"></div>
<div class="r" style="left:1189px;top:674px;width:1px;height:21px;background:#000;"></div>
<div class="r" style="left:220px;top:695px;width:970px;height:1px;background:#000;"></div>
<div class="t" style="left:230.2px;top:675.63px;font-size:18.33px;line-height:18.33px;color:#000;">10.</div>
<div class="t" style="left:284.4px;top:675.63px;font-size:18.33px;line-height:18.33px;color:#000;">«AnimalSpecies»</div>
<div class="t" style="left:814.4px;top:675.63px;font-size:18.33px;line-height:18.33px;color:#000;">Species (ex: dog, cat, rabbit)</div>
<div class="r" style="left:220px;top:696px;width:1px;height:21px;background:#000;"></div>
<div class="r" style="left:274px;top:696px;width:1px;height:21px;background:#000;"></div>
<div class="r" style="left:804px;top:696px;width:1px;height:21px;background:#000;"></div>
<div class="r" style="left:1189px;top:696px;width:1px;height:21px;background:#000;"></div>
<div class="r" style="left:220px;top:717px;width:970px;height:1px;background:#000;"></div>
<div class="t" style="left:230.2px;top:697.63px;font-size:18.33px;line-height:18.33px;color:#000;">11.</div>
<div class="t" style="left:284.4px;top:697.63px;font-size:18.33px;line-height:18.33px;color:#000;">«AnimalSex»</div>
<div class="t" style="left:814.4px;top:697.63px;font-size:18.33px;line-height:18.33px;color:#000;">Sex (male, female)</div>
<div class="r" style="left:220px;top:718px;width:1px;height:21px;background:#000;"></div>
<div class="r" style="left:274px;top:718px;width:1px;height:21px;background:#000;"></div>
<div class="r" style="left:804px;top:718px;width:1px;height:21px;background:#000;"></div>
<div class="r" style="left:1189px;top:718px;width:1px;height:21px;background:#000;"></div>
<div class="r" style="left:220px;top:739px;width:970px;height:1px;background:#000;"></div>
<div class="t" style="left:230.2px;top:719.63px;font-size:18.33px;line-height:18.33px;color:#000;">12.</div>
<div class="t" style="left:284.4px;top:719.63px;font-size:18.33px;line-height:18.33px;color:#000;">«AnimalPrimaryColor»</div>
<div class="t" style="left:814.4px;top:719.63px;font-size:18.33px;line-height:18.33px;color:#000;">Primary color (ex: black, white)</div>
<div class="r" style="left:220px;top:740px;width:1px;height:21px;background:#000;"></div>
<div class="r" style="left:274px;top:740px;width:1px;height:21px;background:#000;"></div>
<div class="r" style="left:804px;top:740px;width:1px;height:21px;background:#000;"></div>
<div class="r" style="left:1189px;top:740px;width:1px;height:21px;background:#000;"></div>
<div class="r" style="left:220px;top:761px;width:970px;height:1px;background:#000;"></div>
<div class="t" style="left:230.2px;top:741.63px;font-size:18.33px;line-height:18.33px;color:#000;">13.</div>
<div class="t" style="left:284.4px;top:741.63px;font-size:18.33px;line-height:18.33px;color:#000;">«AnimalSecondaryColor»</div>
<div class="t" style="left:814.4px;top:741.63px;font-size:18.33px;line-height:18.33px;color:#000;">Secondary color (ex: brown, pointed)</div>
<div class="r" style="left:220px;top:762px;width:1px;height:21px;background:#000;"></div>
<div class="r" style="left:274px;top:762px;width:1px;height:21px;background:#000;"></div>
<div class="r" style="left:804px;top:762px;width:1px;height:21px;background:#000;"></div>
<div class="r" style="left:1189px;top:762px;width:1px;height:21px;background:#000;"></div>
<div class="r" style="left:220px;top:783px;width:970px;height:1px;background:#000;"></div>
<div class="t" style="left:230.2px;top:763.63px;font-size:18.33px;line-height:18.33px;color:#000;">14.</div>
<div class="t" style="left:284.4px;top:763.63px;font-size:18.33px;line-height:18.33px;color:#000;">«AnimalAgeYear»</div>
<div class="t" style="left:814.4px;top:763.63px;font-size:18.33px;line-height:18.33px;color:#000;">Patient’s number of years (ex: 5 years old)</div>
<div class="r" style="left:220px;top:784px;width:1px;height:21px;background:#000;"></div>
<div class="r" style="left:274px;top:784px;width:1px;height:21px;background:#000;"></div>
<div class="r" style="left:804px;top:784px;width:1px;height:21px;background:#000;"></div>
<div class="r" style="left:1189px;top:784px;width:1px;height:21px;background:#000;"></div>
<div class="r" style="left:220px;top:805px;width:970px;height:1px;background:#000;"></div>
<div class="t" style="left:230.2px;top:785.63px;font-size:18.33px;line-height:18.33px;color:#000;">15.</div>
<div class="t" style="left:284.4px;top:785.63px;font-size:18.33px;line-height:18.33px;color:#000;">«AnimalAgeMonths»</div>
<div class="t" style="left:814.4px;top:785.63px;font-size:18.33px;line-height:18.33px;color:#000;">Patient’s number of months (ex: 6 months)</div>
<div class="r" style="left:220px;top:806px;width:1px;height:63px;background:#000;"></div>
<div class="r" style="left:274px;top:806px;width:1px;height:63px;background:#000;"></div>
<div class="r" style="left:804px;top:806px;width:1px;height:63px;background:#000;"></div>
<div class="r" style="left:1189px;top:806px;width:1px;height:63px;background:#000;"></div>
<div class="r" style="left:220px;top:869px;width:970px;height:1px;background:#000;"></div>
<div class="t" style="left:230.2px;top:807.63px;font-size:18.33px;line-height:18.33px;color:#000;">16.</div>
<div class="t" style="left:284.4px;top:807.63px;font-size:18.33px;line-height:18.33px;color:#000;">«AnimalWeight»</div>
<div class="t" style="left:814.4px;top:807.63px;font-size:18.33px;line-height:18.33px;color:#000;">Weight (this is neither in kg nor lbs – it’s</div>
<div class="t" style="left:814.4px;top:828.63px;font-size:18.33px;line-height:18.33px;color:#000;">simply a number such as 50. You can put kg</div>
<div class="t" style="left:814.4px;top:849.63px;font-size:18.33px;line-height:18.33px;color:#000;">or lb after this number)</div>
<div class="r" style="left:220px;top:870px;width:1px;height:35px;background:#000;"></div>
<div class="r" style="left:274px;top:870px;width:1px;height:35px;background:#000;"></div>
<div class="r" style="left:804px;top:870px;width:1px;height:35px;background:#000;"></div>
<div class="r" style="left:1189px;top:870px;width:1px;height:35px;background:#000;"></div>
<div class="r" style="left:220px;top:905px;width:970px;height:1px;background:#000;"></div>
<div class="t" style="left:230.2px;top:871.63px;font-size:18.33px;line-height:18.33px;color:#000;">17.</div>
<div class="t" style="left:284.4px;top:871.63px;font-size:18.33px;line-height:18.33px;color:#000;">«ClinicUnitOfMass»</div>
<div class="t" style="left:814.4px;top:871.63px;font-size:18.33px;line-height:18.33px;color:#000;">Produces either “lbs” or “kgs” depending on</div>
<div class="t" style="left:814.4px;top:892.63px;font-size:18.33px;line-height:18.33px;color:#000;">your clinic’s selected preferences. Intended</div>
<svg class="s" style="left:945px;top:431px;" width="116" height="5" viewBox="0 0 116 5"><path d="M0 3.2 C1 3.2 2 0.8 3 0.8 C4 0.8 5 3.2 6 3.2 C7 3.2 8 0.8 9 0.8 C10 0.8 11 3.2 12 3.2 C13 3.2 14 0.8 15 0.8 C16 0.8 17 3.2 18 3.2 C19 3.2 20 0.8 21 0.8 C22 0.8 23 3.2 24 3.2 C25 3.2 26 0.8 27 0.8 C28 0.8 29 3.2 30 3.2 C31 3.2 32 0.8 33 0.8 C34 0.8 35 3.2 36 3.2 C37 3.2 38 0.8 39 0.8 C40 0.8 41 3.2 42 3.2 C43 3.2 44 0.8 45 0.8 C46 0.8 47 3.2 48 3.2 C49 3.2 50 0.8 51 0.8 C52 0.8 53 3.2 54 3.2 C55 3.2 56 0.8 57 0.8 C58 0.8 59 3.2 60 3.2 C61 3.2 62 0.8 63 0.8 C64 0.8 65 3.2 66 3.2 C67 3.2 68 0.8 69 0.8 C70 0.8 71 3.2 72 3.2 C73 3.2 74 0.8 75 0.8 C76 0.8 77 3.2 78 3.2 C79 3.2 80 0.8 81 0.8 C82 0.8 83 3.2 84 3.2 C85 3.2 86 0.8 87 0.8 C88 0.8 89 3.2 90 3.2 C91 3.2 92 0.8 93 0.8 C94 0.8 95 3.2 96 3.2 C97 3.2 98 0.8 99 0.8 C100 0.8 101 3.2 102 3.2 C103 3.2 104 0.8 105 0.8 C106 0.8 107 3.2 108 3.2 C109 3.2 110 0.8 111 0.8 C112 0.8 113 3.2 114 3.2 C115 3.2 116 0.8 117 0.8 C118 0.8 119 3.2 120 3.2" stroke="#f00" stroke-width="1.3" fill="none"/></svg>
<div class="r" style="left:1125px;top:455px;width:57px;height:3px;background:#f0a0b0;"></div>
<div class="r" style="left:814px;top:476px;width:32px;height:3px;background:#f0a0b0;"></div>
<svg class="s" style="left:1072px;top:821px;" width="24" height="5" viewBox="0 0 24 5"><path d="M0 3.2 C1 3.2 2 0.8 3 0.8 C4 0.8 5 3.2 6 3.2 C7 3.2 8 0.8 9 0.8 C10 0.8 11 3.2 12 3.2 C13 3.2 14 0.8 15 0.8 C16 0.8 17 3.2 18 3.2 C19 3.2 20 0.8 21 0.8 C22 0.8 23 3.2 24 3.2" stroke="#f00" stroke-width="1.3" fill="none"/></svg>
<svg class="s" style="left:835px;top:864px;" width="12" height="5" viewBox="0 0 12 5"><path d="M0 3.2 C1 3.2 2 0.8 3 0.8 C4 0.8 5 3.2 6 3.2 C7 3.2 8 0.8 9 0.8 C10 0.8 11 3.2 12 3.2" stroke="#f00" stroke-width="1.3" fill="none"/></svg>
<svg class="s" style="left:954px;top:886px;" width="24" height="5" viewBox="0 0 24 5"><path d="M0 3.2 C1 3.2 2 0.8 3 0.8 C4 0.8 5 3.2 6 3.2 C7 3.2 8 0.8 9 0.8 C10 0.8 11 3.2 12 3.2 C13 3.2 14 0.8 15 0.8 C16 0.8 17 3.2 18 3.2 C19 3.2 20 0.8 21 0.8 C22 0.8 23 3.2 24 3.2" stroke="#f00" stroke-width="1.3" fill="none"/></svg>
</div></div>
<div class="r" style="left:0px;top:905px;width:1417px;height:27px;background:#373737;border-radius:0 0 8px 0;"></div>
<div class="t" style="left:8.34px;top:912.50px;font-size:13px;line-height:13px;color:#fff;-webkit-text-stroke:0.25px #fff;transform:scaleX(1.0210);">Page 1 of 6</div>
<div class="t" style="left:99.30px;top:912.50px;font-size:13px;line-height:13px;color:#fff;-webkit-text-stroke:0.25px #fff;transform:scaleX(1.0246);">1968 words</div>
<svg class="s" style="left:185px;top:905px;" width="30" height="27" viewBox="0 0 30 27"><path d="M15.2 16.5V20.8H8V7H15.2V13M15.2 7H22.8V13" stroke="#eeeeee" stroke-width="1.7" fill="none"/><path d="M16.6 14.6 24.4 22.4M24.4 14.6 16.6 22.4" stroke="#eeeeee" stroke-width="1.3"/></svg>
<div class="t" style="left:235.14px;top:912.50px;font-size:13px;line-height:13px;color:#fff;-webkit-text-stroke:0.25px #fff;transform:scaleX(0.9857);">Text Predictions: On</div>
<svg class="s" style="left:368px;top:905px;" width="72" height="27" viewBox="0 0 72 27"><path d="M14 20.7H8.3V7H23.9V12.5" stroke="#eeeeee" stroke-width="1.6" fill="none"/><path d="M9 8.6h14.2M10.2 11.8h3M10.2 15h3" stroke="#eeeeee" stroke-width="1.4"/><circle cx="19.1" cy="17" r="4.6" stroke="#eeeeee" stroke-width="1.6" fill="#373737"/><circle cx="19.1" cy="17" r="2" fill="#eeeeee"/><circle cx="54.8" cy="7.8" r="1.8" stroke="#eeeeee" stroke-width="1.3" fill="none"/><path d="M48 10.5Q51 13 54.8 12.5Q58.5 13 61.5 10.5M52.5 13.5 52 17.5 49.5 22.5M57 13.5V17.5" stroke="#eeeeee" stroke-width="1.4" fill="none" stroke-linecap="round"/><path d="M52.2 17.8 54.5 21.5 55.5 19.5" stroke="#eeeeee" stroke-width="1.3" fill="none"/><path d="M58.3 16.2Q58.5 13.8 60.7 13.8Q63 13.9 62.8 16.1Q62.6 17.6 60.7 18.6V20.2" stroke="#eeeeee" stroke-width="1.4" fill="none"/><circle cx="60.7" cy="22" r="0.9" fill="#eeeeee"/></svg>
<div class="t" style="left:436.00px;top:912.50px;font-size:13px;line-height:13px;color:#fff;-webkit-text-stroke:0.25px #fff;transform:scaleX(0.9800);">Accessibility: Unavailable</div>
<svg class="s" style="left:828px;top:909px;" width="22" height="22" viewBox="0 0 22 22"><rect x="1.5" y="2.5" width="16" height="11" stroke="#d8d8d8" stroke-width="1.4" fill="none"/><path d="M6 17h6" stroke="#d8d8d8" stroke-width="1.4"/><circle cx="15" cy="15" r="3.5" stroke="#d8d8d8" stroke-width="1.6" fill="#333"/></svg>
<div class="t" style="left:849.46px;top:912.50px;font-size:13px;line-height:13px;color:#fff;-webkit-text-stroke:0.25px #fff;transform:scaleX(0.9955);">Display Settings</div>
<svg class="s" style="left:962px;top:909px;" width="22" height="22" viewBox="0 0 22 22"><path d="M1 5V1h4M17 1h4v4M21 17v4h-4M5 21H1v-4" stroke="#d8d8d8" stroke-width="1.4" fill="none"/><path d="M6 4h7l4 4v10H6z" stroke="#d8d8d8" stroke-width="1.4" fill="none"/></svg>
<div class="t" style="left:983.00px;top:912.50px;font-size:13px;line-height:13px;color:#fff;-webkit-text-stroke:0.25px #fff;transform:scaleX(0.9637);">Focus</div>
<svg class="s" style="left:1047px;top:910px;" width="20" height="18" viewBox="0 0 20 18"><path d="M1 2h7l2 2 2-2h7v14h-7l-2 1-2-1H1z M10 4v13 M3 6h5M3 9h5M3 12h5M12 6h5M12 9h5M12 12h5" stroke="#d8d8d8" stroke-width="1.3" fill="none"/></svg>
<div class="r" style="left:1082px;top:905px;width:50px;height:27px;background:#3d3d3d;"></div>
<svg class="s" style="left:1098px;top:909px;" width="18" height="21" viewBox="0 0 18 21"><rect x="1.5" y="1.5" width="14" height="18" stroke="#e8e8e8" stroke-width="1.5" fill="none"/><path d="M4 6h9M4 9h9M4 12h9M4 15h9" stroke="#e8e8e8" stroke-width="1.3"/></svg>
<svg class="s" style="left:1148px;top:909px;" width="20" height="22" viewBox="0 0 20 22"><rect x="1.5" y="1.5" width="14" height="16" stroke="#d8d8d8" stroke-width="1.4" fill="none"/><path d="M1.5 5h14M4 8h5M4 11h4" stroke="#d8d8d8" stroke-width="1.3"/><circle cx="14" cy="16" r="4.5" stroke="#d8d8d8" stroke-width="1.3" fill="#333"/><path d="M9.5 16h9M14 11.5v9" stroke="#d8d8d8" stroke-width="1"/></svg>
<div class="r" style="left:1189px;top:919px;width:10px;height:1px;background:#d8d8d8;"></div>
<div class="r" style="left:1205px;top:919px;width:125px;height:1px;background:#b4b4b4;"></div>
<div class="r" style="left:1265px;top:912px;width:6px;height:14px;background:#c8c8c8;"></div>
<div class="r" style="left:1335px;top:919px;width:11px;height:1px;background:#d8d8d8;"></div>
<div class="r" style="left:1340px;top:914px;width:1px;height:11px;background:#d8d8d8;"></div>
<div class="t" style="left:1361.77px;top:912.50px;font-size:13px;line-height:13px;color:#fff;-webkit-text-stroke:0.25px #fff;transform:scaleX(0.9576);">100%</div>
</body></html>
